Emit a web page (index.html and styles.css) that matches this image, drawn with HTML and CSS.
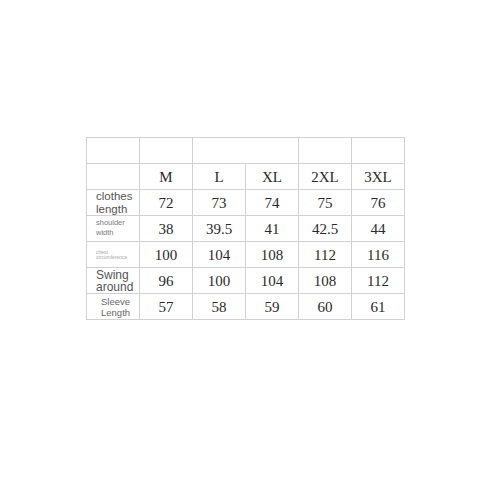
FILE: index.html
```html
<!DOCTYPE html>
<html>
<head>
<meta charset="utf-8">
<link rel="stylesheet" href="styles.css">
</head>
<body>
<div class="page">
  <div class="chart">
    <div class="cell"></div>
    <div class="cell"></div>
    <div class="cell span2"></div>
    <div class="cell"></div>
    <div class="cell"></div>

    <div class="cell"></div>
    <div class="cell num">M</div>
    <div class="cell num">L</div>
    <div class="cell num">XL</div>
    <div class="cell num">2XL</div>
    <div class="cell num">3XL</div>

    <div class="cell label l-clothes">clothes<br>length</div>
    <div class="cell num">72</div>
    <div class="cell num">73</div>
    <div class="cell num">74</div>
    <div class="cell num">75</div>
    <div class="cell num">76</div>

    <div class="cell label l-shoulder">shoulder<br>width</div>
    <div class="cell num">38</div>
    <div class="cell num">39.5</div>
    <div class="cell num">41</div>
    <div class="cell num">42.5</div>
    <div class="cell num">44</div>

    <div class="cell label l-chest">chest<br>circumference</div>
    <div class="cell num">100</div>
    <div class="cell num">104</div>
    <div class="cell num">108</div>
    <div class="cell num">112</div>
    <div class="cell num">116</div>

    <div class="cell label l-swing">Swing<br>around</div>
    <div class="cell num">96</div>
    <div class="cell num">100</div>
    <div class="cell num">104</div>
    <div class="cell num">108</div>
    <div class="cell num">112</div>

    <div class="cell label l-sleeve">Sleeve<br>Length</div>
    <div class="cell num">57</div>
    <div class="cell num">58</div>
    <div class="cell num">59</div>
    <div class="cell num">60</div>
    <div class="cell num">61</div>
  </div>
</div>
</body>
</html>
```

FILE: styles.css
```css
html, body {
  margin: 0;
  padding: 0;
  background: #ffffff;
}

.page {
  width: 480px;
  height: 480px;
  padding: 137px 0 0 86px;
  box-sizing: border-box;
}

.chart {
  display: inline-grid;
  grid-template-columns: repeat(6, 52px);
  grid-template-rows: repeat(7, 25px);
  gap: 1px;
  padding: 1px;
  background: #d2d2d2;
}

.cell {
  background: #ffffff;
  display: flex;
  align-items: center;
  white-space: nowrap;
}

.span2 {
  grid-column: span 2;
}

.num {
  justify-content: center;
  font-family: "Liberation Serif", serif;
  font-size: 15px;
  color: #2a2a2a;
  padding-top: 1px;
}

.label {
  font-family: "Liberation Sans", Arial, sans-serif;
  padding-left: 9px;
}

.l-clothes {
  font-size: 11.5px;
  line-height: 12.5px;
  color: #555555;
}

.l-shoulder {
  font-size: 7.5px;
  line-height: 9.5px;
  color: #7a7a7a;
  padding-bottom: 2px;
}

.l-chest {
  font-size: 5px;
  line-height: 5px;
  color: #a8a8a8;
}

.l-swing {
  font-size: 12px;
  line-height: 12.5px;
  color: #555555;
  padding-top: 1px;
}

.l-sleeve {
  font-size: 9.5px;
  line-height: 11px;
  color: #666666;
  padding-left: 14px;
}
```
